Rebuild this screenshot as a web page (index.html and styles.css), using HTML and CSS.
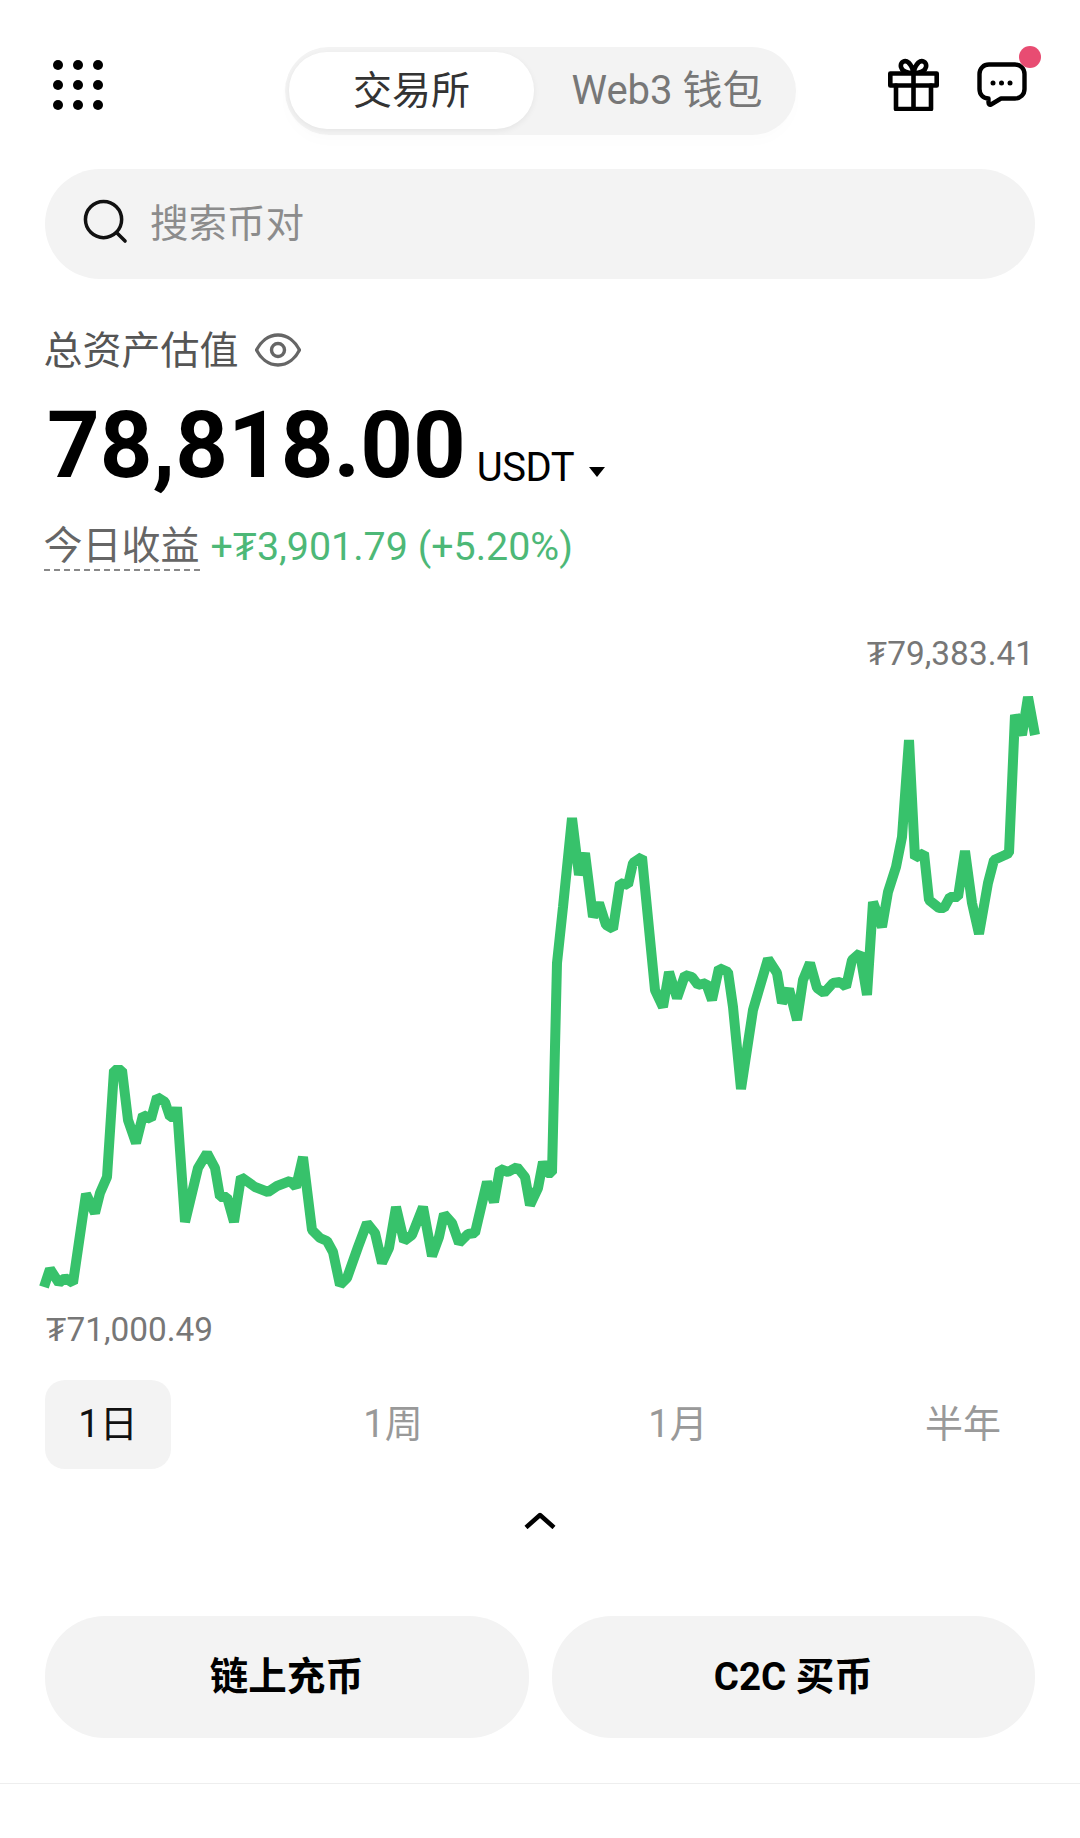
FILE: index.html
```html
<!DOCTYPE html>
<html lang="zh-CN">
<head>
<meta charset="utf-8">
<title>总资产估值</title>
<link rel="stylesheet" href="styles.css">
</head>
<body>
<main class="page">
  <header class="header">
    <div class="dots"><i></i><i></i><i></i><i></i><i></i><i></i><i></i><i></i><i></i></div>
    <nav class="seg">
      <span class="seg-item active">交易所</span>
      <span class="seg-item wallet">Web3 钱包</span>
    </nav>
    <svg class="gift" viewBox="0 0 51 53" fill="none" stroke="#000" stroke-width="4.6" stroke-linejoin="round" stroke-linecap="round">
      <rect x="2.3" y="15.5" width="46.4" height="12"/>
      <path d="M8 27.5V51H43V27.5M25.5 15.5V51"/>
      <path d="M25.5 15C21 15 14 14 13 9C12 4 17 1.500 20.500 4.500C23 7 25 11 25.500 15C26 11 28 7 30.500 4.500C34 1.500 39 4 38 9C37 14 30 15 25.500 15Z"/>
    </svg>
    <div class="chat">
      <svg class="chat-icon" viewBox="0 0 50 46" fill="none" stroke="#000" stroke-width="4.4" stroke-linejoin="round">
        <path d="M12 2.500H38C43.500 2.500 47.500 6.500 47.500 12V27C47.500 32.500 43.500 36.500 38 36.500H24L14 42.500C12.500 43.300 11.500 42 11.500 40.500V36.500C6 36.500 2.500 32.500 2.500 27V12C2.500 6.500 6.500 2.500 12 2.500Z"/>
        <circle cx="16" cy="21" r="2.500" fill="#000" stroke="none"/>
        <circle cx="24.500" cy="21" r="2.500" fill="#000" stroke="none"/>
        <circle cx="33" cy="21" r="2.500" fill="#000" stroke="none"/>
      </svg>
      <span class="badge"></span>
    </div>
  </header>

  <div class="search">
    <svg class="search-icon" viewBox="0 0 46 46" fill="none" stroke="#111" stroke-width="3.600" stroke-linecap="round">
      <circle cx="21" cy="21" r="18.500"/>
      <path d="M34.500 34.500L43 43"/>
    </svg>
    <span>搜索币对</span>
  </div>

  <section class="summary">
    <div class="label-row">
      <span class="label-text">总资产估值</span>
      <svg class="eye" viewBox="0 0 46 34" fill="none" stroke="#666" stroke-width="3.400" stroke-linejoin="round">
        <path d="M1.500 17C5.500 9 13 2 23 2C33 2 40.500 9 44.500 17C40.500 25 33 32 23 32C13 32 5.500 25 1.500 17Z"/>
        <circle cx="23" cy="17" r="6.500"/>
      </svg>
    </div>
    <div class="amount-row">
      <span class="amount">78,818.00</span>
      <span class="unit">USDT</span>
      <svg class="caret" viewBox="0 0 16 10"><path d="M0 0H16L8 10Z" fill="#000"/></svg>
    </div>
    <div class="today-row">
      <span class="today-label">今日收益</span>
      <span class="today-value">+₮3,901.79 (+5.20%)</span>
    </div>
  </section>

  <section class="chart">
    <div class="chart-high">₮79,383.41</div>
    <svg class="chart-svg" viewBox="0 674 1080 636" fill="none">
      <polyline stroke="#37c26b" stroke-width="10" stroke-linejoin="bevel" points="44,1287 50,1269 59,1283 65,1278 73,1283 86,1194 95,1213 100,1193 107,1177 114,1070 122,1070 128,1120 136,1143 143,1115 151,1119 157,1097 165,1102 170,1117 176,1117 177,1107 185,1222 198,1168 207,1153 215,1168 220,1197 227,1197 234,1222 241,1177 255,1187 268,1192 277,1186 290,1181 296,1187 303,1157 312,1230 320,1238 327,1241 333,1252 340,1285 347,1278 358,1247 367,1223 375,1233 382,1263 389,1248 396,1207 404,1241 412,1235 423,1207 432,1256 439,1237 444,1214 452,1223 459,1243 468,1234 475,1233 487,1182 494,1202 500,1169 508,1172 517,1167 525,1177 530,1205 538,1188 543,1162 547,1173 552,1173 557,963 563,907 572,818 579,875 585,853 593,917 599,903 606,925 613,929 620,883 628,885 633,863 642,857 655,990 663,1007 669,972 677,998 685,975 692,977 698,985 706,983 712,1000 719,968 728,972 733,1007 741,1089 753,1010 768,959 777,973 782,1003 789,989 797,1020 803,980 810,963 817,988 824,993 833,983 840,982 846,987 852,960 860,953 867,995 873,902 882,927 888,892 896,867 902,837 909,740 915,858 924,853 929,900 939,908 944,908 950,897 958,897 965,851 972,903 979,934 988,883 994,860 1005,855 1009,853 1015,715 1022,735 1028,697 1035,735"/>
    </svg>
    <div class="chart-low">₮71,000.49</div>
  </section>

  <nav class="tabs">
    <span class="tab active">1日</span>
    <span class="tab">1周</span>
    <span class="tab">1月</span>
    <span class="tab">半年</span>
  </nav>

  <svg class="chevron" viewBox="0 0 32 17" fill="none" stroke="#000" stroke-width="4.500" stroke-linejoin="round">
    <path d="M2 15.500L16 3L30 15.500"/>
  </svg>

  <div class="actions">
    <span class="action">链上充币</span>
    <span class="action">C2C 买币</span>
  </div>

  <div class="divider"></div>
</main>
</body>
</html>
```
FILE: styles.css
```css
* {
  box-sizing: border-box;
}

html,
body {
  margin: 0;
  background: #fff;
}

body {
  font-family: Roboto, "Noto Sans CJK SC", sans-serif;
  color: #000;
}

.page {
  width: 1080px;
  height: 1838px;
  overflow: hidden;
}

.header {
  display: flex;
  align-items: flex-start;
  padding: 47px 0 0 53px;
}

.dots {
  display: grid;
  grid-template-columns: repeat(3, 10px);
  grid-auto-rows: 10px;
  gap: 10px;
  width: 50px;
  margin-top: 13px;
}

.dots i {
  border-radius: 50%;
  background: #000;
}

.seg {
  display: flex;
  width: 511px;
  height: 88px;
  margin-left: 182px;
  padding: 5px 4px 6px;
  border-radius: 44px;
  background: #f3f3f3;
  box-shadow: 0 8px 14px rgba(0, 0, 0, 0.012);
}

.seg-item {
  flex: 1;
  display: flex;
  align-items: center;
  justify-content: center;
  padding-bottom: 8px;
  font-size: 40px;
  color: #777;
}

.seg-item.wallet {
  padding-left: 8px;
}

.seg-item.active {
  flex: 0 0 245px;
  border-radius: 38px;
  background: #fff;
  color: #333;
  font-size: 39px;
  box-shadow: 0 2px 6px rgba(0, 0, 0, 0.06);
}

.gift {
  width: 51px;
  height: 53px;
  margin: 11px 0 0 92px;
}

.chat {
  position: relative;
  width: 50px;
  height: 46px;
  margin: 15px 0 0 38px;
}

.chat-icon {
  display: block;
  width: 50px;
  height: 46px;
}

.badge {
  position: absolute;
  top: -16px;
  right: -14px;
  width: 22px;
  height: 22px;
  border-radius: 50%;
  background: #e84c72;
}

.search {
  display: flex;
  align-items: center;
  gap: 22px;
  height: 110px;
  margin: 34px 45px 0;
  padding: 0 0 6px 38px;
  border-radius: 55px;
  background: #f3f3f3;
  font-size: 38.500px;
  color: #8c8c8c;
}

.search span {
  padding-bottom: 3px;
}

.search-icon {
  width: 45px;
  height: 45px;
}

.summary {
  padding: 0 45px 0 43.500px;
}

.label-row {
  display: flex;
  align-items: center;
  gap: 16px;
  height: 52px;
  margin-top: 45px;
  font-size: 39px;
  color: #555;
}

.label-text {
  padding-bottom: 6px;
}

.eye {
  width: 46px;
  height: 34px;
}

.amount-row {
  display: flex;
  align-items: baseline;
  height: 100px;
  margin-top: 20px;
  line-height: 100px;
}

.amount {
  margin-left: 3.500px;
  font-size: 92px;
  font-weight: 700;
}

.unit {
  margin-left: 11px;
  font-size: 40px;
  letter-spacing: -0.5px;
  transform: translateY(4px);
}

.caret {
  width: 16px;
  height: 10px;
  margin: 0 0 9px 15px;
}

.today-row {
  display: flex;
  align-items: center;
  gap: 11px;
  height: 52px;
  margin-top: 26px;
  font-size: 39px;
}

.today-label {
  height: 45px;
  line-height: 41px;
  border-bottom: 2px dashed #888;
  color: #666;
}

.today-value {
  padding-bottom: 4px;
  font-size: 39.400px;
  color: #4db877;
}

.chart {
  margin-top: 60px;
}

.chart-high,
.chart-low {
  height: 40px;
  line-height: 40px;
  font-size: 33.400px;
  color: #777;
}

.chart-high {
  padding-right: 46px;
  text-align: right;
}

.chart-low {
  padding-left: 46px;
}

.chart-svg {
  display: block;
  width: 1080px;
  height: 636px;
}

.tabs {
  display: flex;
  gap: 159px;
  margin: 30px 0 0 45px;
}

.tab {
  display: flex;
  align-items: center;
  justify-content: center;
  width: 126px;
  height: 89px;
  padding-bottom: 8px;
  border-radius: 20px;
  font-size: 38px;
  color: #999;
}

.tab.active {
  background: #f3f3f3;
  color: #111;
}

.chevron {
  display: block;
  width: 32px;
  height: 17px;
  margin: 43px auto 0;
}

.actions {
  display: flex;
  gap: 23px;
  margin: 87px 45px 0;
}

.action {
  flex: 1;
  display: flex;
  align-items: center;
  justify-content: center;
  height: 122px;
  padding-bottom: 8px;
  border-radius: 60px;
  background: #f3f3f3;
  font-size: 38.500px;
  font-weight: 700;
}

.divider {
  height: 1px;
  margin-top: 45px;
  background: #eee;
}
```
